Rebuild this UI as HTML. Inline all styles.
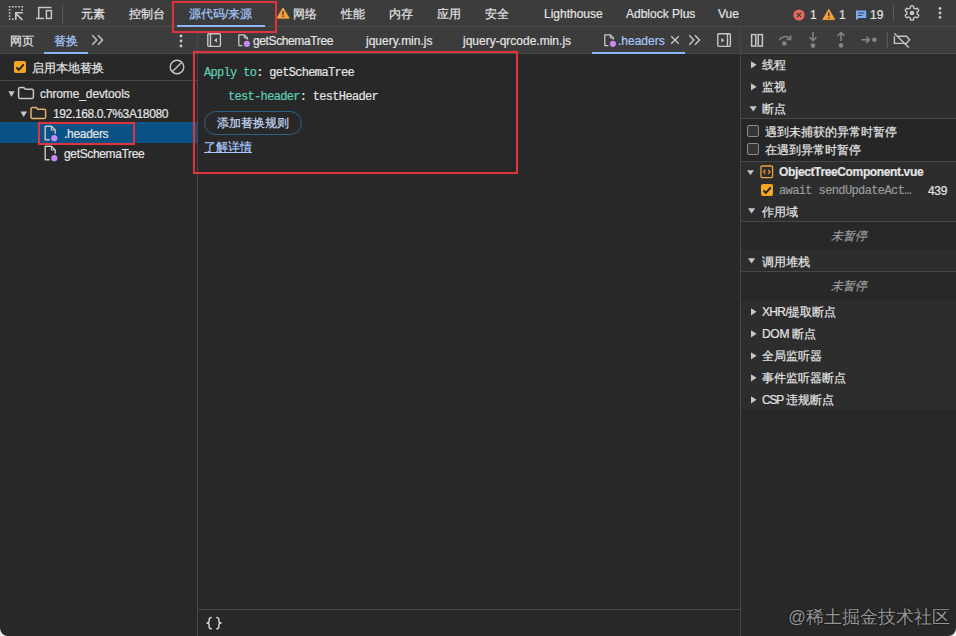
<!DOCTYPE html>
<html><head><meta charset="utf-8">
<style>
*{margin:0;padding:0;box-sizing:border-box}
html,body{width:956px;height:636px;overflow:hidden;background:#ececec}
body{font-family:"Liberation Sans",sans-serif;font-size:12px;color:#e3e3e3;position:relative}
#app{position:absolute;left:0;top:0;width:956px;height:636px;background:#282828;border-radius:0 0 8px 8px;overflow:hidden}
.abs{position:absolute}
.bar{position:absolute;background:#3c3c3c}
.hl{position:absolute;height:1px;background:#474747}
.vl{position:absolute;width:1px;background:#474747}
.t{position:absolute;top:6px;line-height:15px;white-space:nowrap;color:#e3e3e3;-webkit-text-stroke:0.2px currentColor}
.c{top:7px}
.red{position:absolute;border:2px solid #dc3540;box-shadow:0 0 0.8px rgba(200,40,48,.7)}
.mono{font-family:"Liberation Mono",monospace;font-size:12px;letter-spacing:-0.68px}
svg{position:absolute;overflow:visible}
.ub{position:absolute;height:2px;background:#8ab4f8}
.cb{position:absolute;width:12px;height:12px;border-radius:2px}
.on{background:#f6a623}
.off{border:1.3px solid #8c8c8c;background:#363636}
.sec{position:absolute;left:741px;width:215px;background:#2a2a2a}
</style></head><body>
<div id="app">
 <!-- ===== top bar ===== -->
 <div class="bar" style="left:0;top:0;width:956px;height:26px"></div>
 <div class="hl" style="left:0;top:26px;width:956px;background:#4a4a4a"></div>
 <!-- inspect icon -->
 <svg style="left:0;top:0" width="60" height="26" viewBox="0 0 60 26">
  <g fill="#c7c7c7">
   <rect x="8.8" y="6" width="1.6" height="1.6"/><rect x="12" y="6" width="1.6" height="1.6"/><rect x="15.1" y="6" width="1.6" height="1.6"/><rect x="18.2" y="6" width="1.6" height="1.6"/><rect x="21.3" y="6" width="1.6" height="1.6"/>
   <rect x="8.8" y="9.1" width="1.6" height="1.6"/><rect x="8.8" y="12.2" width="1.6" height="1.6"/><rect x="8.8" y="15.3" width="1.6" height="1.6"/><rect x="8.8" y="18.3" width="1.6" height="1.6"/>
   <rect x="12" y="18.3" width="1.6" height="1.6"/><rect x="21.3" y="9.1" width="1.6" height="1.6"/>
  </g>
  <g fill="none" stroke="#c7c7c7" stroke-width="1.6">
   <path d="M15 12.7H22.9M15.8 12.7V20M15.4 13.1L22.4 19.8"/>
  </g>
  <!-- device icon -->
  <g fill="none" stroke="#c7c7c7" stroke-width="1.5">
   <path d="M51.5 7.5H38.7V18.5"/><path d="M35.9 18.5H44"/>
   <rect x="46.4" y="10.6" width="5" height="7.8"/>
  </g>
 </svg>
 <div class="vl" style="left:62px;top:5px;height:18px;background:#5a5a5a"></div>
 <div class="t c" style="left:81px">元素</div>
 <div class="t c" style="left:129px">控制台</div>
 <div class="t c" style="left:189px;color:#a8c7fa">源代码/来源</div>
 <div class="ub" style="left:177px;top:25px;width:88px"></div>
 <svg style="left:276px;top:7px" width="14" height="12" viewBox="0 0 14 12">
  <path d="M7 0.8L13.2 11.2H0.8Z" fill="#f2a33a" stroke="#f2a33a" stroke-width="0.8" stroke-linejoin="round"/>
  <rect x="6.3" y="4" width="1.4" height="3.8" fill="#3c3c3c"/><rect x="6.3" y="8.6" width="1.4" height="1.4" fill="#3c3c3c"/>
 </svg>
 <div class="t c" style="left:293px">网络</div>
 <div class="t c" style="left:341px">性能</div>
 <div class="t c" style="left:389px">内存</div>
 <div class="t c" style="left:437px">应用</div>
 <div class="t c" style="left:485px">安全</div>
 <div class="t" style="left:544px;top:7px">Lighthouse</div>
 <div class="t" style="left:626px;top:7px">Adblock Plus</div>
 <div class="t" style="left:718px;top:7px">Vue</div>
 <!-- counters -->
 <svg style="left:790px;top:7px" width="100" height="16" viewBox="0 0 100 16">
  <circle cx="9" cy="8" r="5.6" fill="#e46962"/>
  <path d="M6.9 5.9L11.1 10.1M11.1 5.9L6.9 10.1" stroke="#3c3c3c" stroke-width="1.2"/>
  <path d="M38.8 2.2L44.8 12.6H32.8Z" fill="#f2a33a" stroke="#f2a33a" stroke-width="0.8" stroke-linejoin="round"/>
  <rect x="38.1" y="5.4" width="1.4" height="3.8" fill="#3c3c3c"/><rect x="38.1" y="10" width="1.4" height="1.4" fill="#3c3c3c"/>
  <path d="M66 3.4H76.2V11H68.6L66 13.2Z" fill="#7cacf8"/>
  <path d="M68 6H74.2M68 8.4H72.5" stroke="#3c3c3c" stroke-width="1"/>
 </svg>
 <div class="t" style="left:810px;top:8px">1</div>
 <div class="t" style="left:839px;top:8px">1</div>
 <div class="t" style="left:870px;top:8px">19</div>
 <div class="vl" style="left:893px;top:5px;height:16px;background:#5a5a5a"></div>
 <!-- gear -->
 <svg style="left:900px;top:1px" width="24" height="24" viewBox="0 0 24 24">
  <path fill="none" stroke="#c7c7c7" stroke-width="1.35" d="M17.20 12.00 L17.20 12.14 L17.19 12.27 L17.18 12.41 L17.17 12.54 L17.16 12.68 L17.14 12.81 L17.11 12.95 L17.40 13.15 L17.69 13.37 L17.99 13.60 L18.27 13.86 L18.54 14.13 L18.79 14.40 L18.72 14.58 L18.65 14.76 L18.58 14.93 L18.50 15.10 L18.42 15.27 L18.33 15.44 L18.24 15.60 L18.14 15.76 L18.04 15.92 L17.93 16.08 L17.82 16.23 L17.71 16.38 L17.60 16.53 L17.47 16.68 L17.11 16.60 L16.75 16.50 L16.38 16.38 L16.03 16.25 L15.69 16.10 L15.38 15.96 L15.27 16.04 L15.17 16.13 L15.06 16.21 L14.95 16.29 L14.83 16.36 L14.72 16.43 L14.60 16.50 L14.48 16.57 L14.36 16.63 L14.24 16.69 L14.12 16.75 L13.99 16.80 L13.86 16.85 L13.74 16.90 L13.71 17.25 L13.66 17.61 L13.60 17.99 L13.53 18.36 L13.43 18.73 L13.31 19.08 L13.13 19.11 L12.94 19.14 L12.75 19.16 L12.56 19.18 L12.38 19.19 L12.19 19.20 L12.00 19.20 L11.81 19.20 L11.62 19.19 L11.44 19.18 L11.25 19.16 L11.06 19.14 L10.87 19.11 L10.69 19.08 L10.57 18.73 L10.47 18.36 L10.40 17.99 L10.34 17.61 L10.29 17.25 L10.26 16.90 L10.14 16.85 L10.01 16.80 L9.88 16.75 L9.76 16.69 L9.64 16.63 L9.52 16.57 L9.40 16.50 L9.28 16.43 L9.17 16.36 L9.05 16.29 L8.94 16.21 L8.83 16.13 L8.73 16.04 L8.62 15.96 L8.31 16.10 L7.97 16.25 L7.62 16.38 L7.25 16.50 L6.89 16.60 L6.53 16.68 L6.40 16.53 L6.29 16.38 L6.18 16.23 L6.07 16.08 L5.96 15.92 L5.86 15.76 L5.76 15.60 L5.67 15.44 L5.58 15.27 L5.50 15.10 L5.42 14.93 L5.35 14.76 L5.28 14.58 L5.21 14.40 L5.46 14.13 L5.73 13.86 L6.01 13.60 L6.31 13.37 L6.60 13.15 L6.89 12.95 L6.86 12.81 L6.84 12.68 L6.83 12.54 L6.82 12.41 L6.81 12.27 L6.80 12.14 L6.80 12.00 L6.80 11.86 L6.81 11.73 L6.82 11.59 L6.83 11.46 L6.84 11.32 L6.86 11.19 L6.89 11.05 L6.60 10.85 L6.31 10.63 L6.01 10.40 L5.73 10.14 L5.46 9.87 L5.21 9.60 L5.28 9.42 L5.35 9.24 L5.42 9.07 L5.50 8.90 L5.58 8.73 L5.67 8.56 L5.76 8.40 L5.86 8.24 L5.96 8.08 L6.07 7.92 L6.18 7.77 L6.29 7.62 L6.40 7.47 L6.53 7.32 L6.89 7.40 L7.25 7.50 L7.62 7.62 L7.97 7.75 L8.31 7.90 L8.62 8.04 L8.73 7.96 L8.83 7.87 L8.94 7.79 L9.05 7.71 L9.17 7.64 L9.28 7.57 L9.40 7.50 L9.52 7.43 L9.64 7.37 L9.76 7.31 L9.88 7.25 L10.01 7.20 L10.14 7.15 L10.26 7.10 L10.29 6.75 L10.34 6.39 L10.40 6.01 L10.47 5.64 L10.57 5.27 L10.69 4.92 L10.87 4.89 L11.06 4.86 L11.25 4.84 L11.44 4.82 L11.62 4.81 L11.81 4.80 L12.00 4.80 L12.19 4.80 L12.38 4.81 L12.56 4.82 L12.75 4.84 L12.94 4.86 L13.13 4.89 L13.31 4.92 L13.43 5.27 L13.53 5.64 L13.60 6.01 L13.66 6.39 L13.71 6.75 L13.74 7.10 L13.86 7.15 L13.99 7.20 L14.12 7.25 L14.24 7.31 L14.36 7.37 L14.48 7.43 L14.60 7.50 L14.72 7.57 L14.83 7.64 L14.95 7.71 L15.06 7.79 L15.17 7.87 L15.27 7.96 L15.38 8.04 L15.69 7.90 L16.03 7.75 L16.38 7.62 L16.75 7.50 L17.11 7.40 L17.47 7.32 L17.60 7.47 L17.71 7.62 L17.82 7.77 L17.93 7.92 L18.04 8.08 L18.14 8.24 L18.24 8.40 L18.33 8.56 L18.42 8.73 L18.50 8.90 L18.58 9.07 L18.65 9.24 L18.72 9.42 L18.79 9.60 L18.54 9.87 L18.27 10.14 L17.99 10.40 L17.69 10.63 L17.40 10.85 L17.11 11.05 L17.14 11.19 L17.16 11.32 L17.17 11.46 L17.18 11.59 L17.19 11.73 L17.20 11.86Z"/>
  <circle cx="12" cy="12" r="2.3" fill="#c7c7c7"/>
 </svg>
 <svg style="left:934px;top:5px" width="12" height="16" viewBox="0 0 12 16">
  <circle cx="6" cy="3.5" r="1.4" fill="#c7c7c7"/><circle cx="6" cy="8" r="1.4" fill="#c7c7c7"/><circle cx="6" cy="12.4" r="1.4" fill="#c7c7c7"/>
 </svg>

 <!-- ===== second bar ===== -->
 <div class="bar" style="left:0;top:27px;width:956px;height:26px"></div>
 <div class="hl" style="left:0;top:53px;width:956px;background:#4a4a4a"></div>
 <div class="t" style="left:10px;top:34px">网页</div>
 <div class="t" style="left:54px;top:34px;color:#a8c7fa">替换</div>
 <div class="ub" style="left:44px;top:52px;width:44px"></div>
 <svg style="left:90px;top:33px" width="16" height="14" viewBox="0 0 16 14">
  <path d="M2.3 2.3L6.8 7L2.3 11.7M8 2.3L12.5 7L8 11.7" fill="none" stroke="#c7c7c7" stroke-width="1.4"/>
 </svg>
 <svg style="left:176px;top:33px" width="10" height="16" viewBox="0 0 10 16">
  <circle cx="5" cy="3" r="1.4" fill="#c7c7c7"/><circle cx="5" cy="8" r="1.4" fill="#c7c7c7"/><circle cx="5" cy="13" r="1.4" fill="#c7c7c7"/>
 </svg>
 <!-- sidebar toggle -->
 <svg style="left:206px;top:32px" width="16" height="16" viewBox="0 0 16 16">
  <rect x="1.8" y="1.8" width="12.6" height="12.6" rx="1" fill="none" stroke="#c7c7c7" stroke-width="1.4"/>
  <path d="M4.5 2V14.2" stroke="#c7c7c7" stroke-width="1.4"/>
  <path d="M11 6L8 8.2L11 10.4Z" fill="#c7c7c7"/>
 </svg>
 <!-- file icon getSchemaTree -->
 <svg style="left:236px;top:33px" width="16" height="16" viewBox="0 0 16 16">
  <path d="M6.5 12.6H2.8V1.8H8.2L11.4 5V7.5" fill="none" stroke="#c7c7c7" stroke-width="1.3" stroke-linejoin="round"/><path d="M8.2 2V5H11.2" fill="none" stroke="#c7c7c7" stroke-width="1"/>
  <circle cx="10.9" cy="10.8" r="4.3" fill="#3c3c3c"/><circle cx="10.9" cy="10.8" r="3.1" fill="#c58af9"/>
 </svg>
 <div class="t" style="left:253px;top:34px;letter-spacing:-0.38px">getSchemaTree</div>
 <div class="t" style="left:366px;top:34px">jquery.min.js</div>
 <div class="t" style="left:463px;top:34px">jquery-qrcode.min.js</div>
 <svg style="left:602px;top:33px" width="16" height="16" viewBox="0 0 16 16">
  <path d="M6.5 12.6H2.8V1.8H8.2L11.4 5V7.5" fill="none" stroke="#c7c7c7" stroke-width="1.3" stroke-linejoin="round"/><path d="M8.2 2V5H11.2" fill="none" stroke="#c7c7c7" stroke-width="1"/>
  <circle cx="10.9" cy="10.8" r="4.3" fill="#3c3c3c"/><circle cx="10.9" cy="10.8" r="3.1" fill="#c58af9"/>
 </svg>
 <div class="t" style="left:618px;top:34px;color:#a8c7fa">.headers</div>
 <svg style="left:668px;top:33px" width="14" height="14" viewBox="0 0 14 14">
  <path d="M3.2 3.2L10.8 10.8M10.8 3.2L3.2 10.8" stroke="#c7c7c7" stroke-width="1.3"/>
 </svg>
 <div class="ub" style="left:592px;top:52px;width:93px"></div>
 <svg style="left:687px;top:33px" width="16" height="14" viewBox="0 0 16 14">
  <path d="M2.3 2.3L6.8 7L2.3 11.7M8 2.3L12.5 7L8 11.7" fill="none" stroke="#c7c7c7" stroke-width="1.4"/>
 </svg>
 <svg style="left:716px;top:32px" width="16" height="16" viewBox="0 0 16 16">
  <rect x="1.8" y="1.8" width="12.6" height="12.6" rx="1" fill="none" stroke="#c7c7c7" stroke-width="1.4"/>
  <path d="M11.5 2V14.2" stroke="#c7c7c7" stroke-width="1.4"/>
  <path d="M5.4 6L8.4 8.2L5.4 10.4Z" fill="#c7c7c7"/>
 </svg>
 <!-- debugger toolbar -->
 <svg style="left:741px;top:27px" width="215" height="26" viewBox="0 0 215 26">
  <g fill="none" stroke="#c7c7c7" stroke-width="1.5">
   <rect x="10.6" y="7.6" width="4.2" height="11.5"/><rect x="17.2" y="7.6" width="4.2" height="11.5"/>
  </g>
  <g fill="none" stroke="#858585" stroke-width="1.5">
   <path d="M38.2 13C40.5 9.2 46 8.4 49 11.6"/>
   <path d="M49.6 8.2V12.4H45.4" />
   <path d="M72 5V13.5M68.6 10.2L72 13.6L75.4 10.2"/>
   <path d="M100 5.5V14M96.6 8.9L100 5.5L103.4 8.9"/>
   <path d="M120.3 12.8H128.3M125.2 9.7L128.3 12.8L125.2 15.9"/>
  </g>
  <g fill="#858585">
   <circle cx="43.3" cy="16.5" r="2.3"/><circle cx="72" cy="18.6" r="2.3"/><circle cx="100" cy="18.4" r="2.3"/><circle cx="133.4" cy="12.8" r="2.3"/>
  </g>
  <path d="M146.5 5.5V20.5" stroke="#5a5a5a" stroke-width="1"/>
  <g fill="none" stroke="#c7c7c7" stroke-width="1.4">
   <path d="M153.4 9.2V16.4H165.4L168.6 12.8L165.4 9.2H157"/>
   <path d="M153.4 6.4L167.8 20.6"/>
  </g>
 </svg>

 <!-- ===== dividers ===== -->
 <div class="vl" style="left:197px;top:27px;height:609px"></div>
 <div class="vl" style="left:740px;top:27px;height:609px"></div>

 <!-- ===== left panel ===== -->
 <div class="cb on" style="left:14px;top:61px"></div>
 <svg style="left:14px;top:61px" width="12" height="12" viewBox="0 0 12 12"><path d="M2.4 6.3L4.8 8.9L9.8 3.4" fill="none" stroke="#1e1e1e" stroke-width="1.8"/></svg>
 <div class="t" style="left:32px;top:61px">启用本地替换</div>
 <svg style="left:169px;top:59px" width="16" height="16" viewBox="0 0 16 16">
  <circle cx="8" cy="8" r="6.8" fill="none" stroke="#c7c7c7" stroke-width="1.4"/>
  <path d="M12.8 3.2L3.2 12.8" stroke="#c7c7c7" stroke-width="1.4"/>
 </svg>
 <div class="hl" style="left:0;top:80px;width:197px"></div>
 <!-- tree -->
 <svg style="left:0;top:82px" width="60" height="40" viewBox="0 0 60 40">
  <path d="M8.4 9.2H14.6L11.5 15Z" fill="#c7c7c7"/>
  <path d="M18.6 7Q18.6 5.4 20.2 5.4H23.6L25.4 7.2H31.8Q33.4 7.2 33.4 8.8V15Q33.4 16.6 31.8 16.6H20.2Q18.6 16.6 18.6 15Z" fill="none" stroke="#c7c7c7" stroke-width="1.5" stroke-linejoin="round"/>
  <path d="M20.4 29.4H27L23.7 35Z" fill="#c7c7c7"/>
  <path d="M31 27Q31 25.4 32.6 25.4H36L37.8 27.2H44Q45.6 27.2 45.6 28.8V35Q45.6 36.6 44 36.6H32.6Q31 36.6 31 35Z" fill="none" stroke="#e8b26a" stroke-width="1.5" stroke-linejoin="round"/>
 </svg>
 <div class="t" style="left:40px;top:87px;letter-spacing:-0.12px">chrome_devtools</div>
 <div class="t" style="left:53px;top:107px;letter-spacing:-0.37px">192.168.0.7%3A18080</div>
 <div class="abs" style="left:0;top:122px;width:197px;height:21px;background:#0a5286"></div>
 <svg style="left:42px;top:124px" width="18" height="18" viewBox="0 0 18 18">
  <path d="M7.8 15.8H3.2V2.2H9.4L13.2 6V9.8" fill="none" stroke="#c7c7c7" stroke-width="1.4" stroke-linejoin="round"/><path d="M9.4 2.4V6H13" fill="none" stroke="#c7c7c7" stroke-width="1.1"/>
  <circle cx="12.3" cy="14.2" r="4.2" fill="#0a5286"/><circle cx="12.3" cy="14.2" r="3.1" fill="#c58af9"/>
 </svg>
 <div class="t" style="left:64px;top:127px;letter-spacing:-0.3px">.headers</div>
 <svg style="left:42px;top:144px" width="18" height="18" viewBox="0 0 18 18">
  <path d="M7.8 15.8H3.2V2.2H9.4L13.2 6V9.8" fill="none" stroke="#c7c7c7" stroke-width="1.4" stroke-linejoin="round"/><path d="M9.4 2.4V6H13" fill="none" stroke="#c7c7c7" stroke-width="1.1"/>
  <circle cx="12.3" cy="14.2" r="4.2" fill="#282828"/><circle cx="12.3" cy="14.2" r="3.1" fill="#c58af9"/>
 </svg>
 <div class="t" style="left:64px;top:147px;letter-spacing:-0.35px">getSchemaTree</div>

 <!-- ===== editor ===== -->
 <div class="t mono" style="left:204px;top:66px"><span style="color:#5fcfb5">Apply to</span>: getSchemaTree</div>
 <div class="t mono" style="left:228px;top:90px"><span style="color:#5fcfb5">test-header</span>: testHeader</div>
 <div class="abs" style="left:204px;top:111px;width:98px;height:24px;border:1px solid #2a6283;border-radius:12px"></div>
 <div class="t" style="left:217px;top:116px;color:#c9daf6">添加替换规则</div>
 <div class="t" style="left:204px;top:140px;color:#a8c7fa;text-decoration:underline">了解详情</div>
 <div class="hl" style="left:197px;top:609px;width:543px"></div>
 <svg style="left:200px;top:612px" width="30" height="22" viewBox="0 0 30 22">
  <path d="M11.8 5.4C9.6 5.4 9.1 6.2 9.1 8V9.6C9.1 10.6 8.5 11.1 6.4 11.1C8.5 11.1 9.1 11.6 9.1 12.6V14.4C9.1 16.2 9.6 16.9 11.8 16.9" fill="none" stroke="#d6d6d6" stroke-width="1.4"/>
  <path d="M16.2 5.4C18.4 5.4 18.9 6.2 18.9 8V9.6C18.9 10.6 19.5 11.1 21.6 11.1C19.5 11.1 18.9 11.6 18.9 12.6V14.4C18.9 16.2 18.4 16.9 16.2 16.9" fill="none" stroke="#d6d6d6" stroke-width="1.4"/>
 </svg>

 <!-- ===== right sidebar ===== -->
 <div class="abs" style="left:741px;top:54px;width:215px;height:356px;background:#2d2d2e"></div>
 <div class="abs" style="left:741px;top:119px;width:215px;height:42px;background:#262626"></div>
 <div class="abs" style="left:741px;top:222px;width:215px;height:28px;background:#282828"></div>
 <div class="abs" style="left:741px;top:272px;width:215px;height:28px;background:#282828"></div>
 <svg style="left:741px;top:54px" width="215" height="380" viewBox="0 0 215 380">
  <g fill="#c7c7c7">
   <path d="M10 7.2V14.4L15.6 10.8Z"/>
   <path d="M10 29.2V36.4L15.6 32.8Z"/>
   <path d="M8.6 52.2H15.8L12.2 57.4Z"/>
   <path d="M6 116.2H13L9.5 121Z"/>
   <path d="M7 154.2H14.2L10.6 159.4Z"/>
   <path d="M7 204.2H14.2L10.6 209.4Z"/>
   <path d="M10 254.2V261.4L15.6 257.8Z"/>
   <path d="M10 276.2V283.4L15.6 279.8Z"/>
   <path d="M10 298.2V305.4L15.6 301.8Z"/>
   <path d="M10 320.2V327.4L15.6 323.8Z"/>
   <path d="M10 342.2V349.4L15.6 345.8Z"/>
  </g>
 </svg>
 <div class="t" style="left:762px;top:58px">线程</div>
 <div class="t" style="left:762px;top:80px">监视</div>
 <div class="t" style="left:762px;top:102px">断点</div>
 <div class="hl" style="left:741px;top:118px;width:215px"></div>
 <div class="cb off" style="left:747px;top:125px"></div>
 <div class="t" style="left:765px;top:125px">遇到未捕获的异常时暂停</div>
 <div class="cb off" style="left:747px;top:143px"></div>
 <div class="t" style="left:765px;top:143px">在遇到异常时暂停</div>
 <div class="hl" style="left:741px;top:161px;width:215px"></div>
 <svg style="left:760px;top:165px" width="14" height="14" viewBox="0 0 14 14">
  <rect x="1" y="1" width="11.6" height="11.6" rx="1" fill="none" stroke="#f2a33a" stroke-width="1.3"/>
  <path d="M5.4 4.8L3.6 6.8L5.4 8.8M8.2 4.8L10 6.8L8.2 8.8" fill="none" stroke="#f2a33a" stroke-width="1.2"/>
 </svg>
 <div class="t" style="left:779px;top:165px;font-weight:bold;letter-spacing:-0.37px">ObjectTreeComponent.vue</div>
 <div class="cb on" style="left:761px;top:184px"></div>
 <svg style="left:761px;top:184px" width="12" height="12" viewBox="0 0 12 12"><path d="M2.4 6.3L4.8 8.9L9.8 3.4" fill="none" stroke="#1e1e1e" stroke-width="1.8"/></svg>
 <div class="t mono" style="left:779px;top:184px;color:#9a9a9a;letter-spacing:-0.61px">await sendUpdateAct…</div>
 <div class="t" style="left:928px;top:184px;letter-spacing:-0.3px">439</div>
 <div class="t" style="left:762px;top:205px">作用域</div>
 <div class="hl" style="left:741px;top:221px;width:215px"></div>
 <div class="t" style="left:831px;top:229px;color:#9a9a9a;font-style:italic">未暂停</div>
 <div class="t" style="left:762px;top:255px">调用堆栈</div>
 <div class="hl" style="left:741px;top:271px;width:215px"></div>
 <div class="t" style="left:831px;top:279px;color:#9a9a9a;font-style:italic">未暂停</div>
 <div class="t" style="left:762px;top:305px"><span style="letter-spacing:-0.65px">XHR/</span>提取断点</div>
 <div class="t" style="left:762px;top:327px"><span style="letter-spacing:-0.3px">DOM </span>断点</div>
 <div class="t" style="left:762px;top:349px">全局监听器</div>
 <div class="t" style="left:762px;top:371px">事件监听器断点</div>
 <div class="t" style="left:762px;top:393px"><span style="letter-spacing:-1.2px">CSP</span><span style="letter-spacing:0"> </span>违规断点</div>

 <!-- watermark -->
 <div class="t" style="left:788px;top:607px;font-size:17.7px;line-height:21px;color:#959595;-webkit-text-stroke:0;text-shadow:0 0 1.5px #000">@稀土掘金技术社区</div>

 <!-- annotations -->
 <div class="red" style="left:172px;top:1px;width:105px;height:32px"></div>
 <div class="red" style="left:193px;top:51px;width:325px;height:123px"></div>
 <div class="red" style="left:38px;top:122px;width:97px;height:23px"></div>
</div>
</body></html>
